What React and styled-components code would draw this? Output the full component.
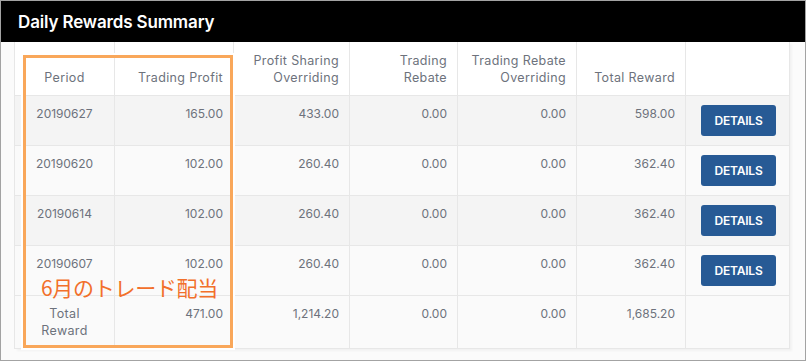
import React from "react";
import styled, { createGlobalStyle } from "styled-components";

const Global = createGlobalStyle`
  html, body { margin: 0; padding: 0; background: #fff; }
  * { box-sizing: border-box; }
`;

const Frame = styled.div`
  width: 806px;
  height: 361px;
  border: 1px solid #a3a3a3;
  background: #fbfbfb;
  display: flex;
  flex-direction: column;
  font-family: Inter, "Noto Sans", sans-serif;
`;

const TitleBar = styled.div`
  height: 41px;
  flex: none;
  background: #000;
  color: #fff;
  display: flex;
  align-items: center;
  padding-left: 17px;
  font-size: 17px;
  font-weight: 600;
  letter-spacing: -0.15px;
`;

const Body = styled.div`
  padding: 0 15px 0 13px;
`;

const TableWrap = styled.div`
  position: relative;
  width: 775px;
  box-shadow: 3px 2px 2px rgba(0, 0, 0, 0.04);
`;

const Table = styled.table`
  width: 775px;
  border-collapse: collapse;
  table-layout: fixed;
  background: #fff;
  font-size: 12px;
  color: #6d727c;
`;

const HeadRow = styled.tr`
  height: 53px;
  background: #fff;
`;

const Row = styled.tr`
  height: ${(p) => (p.$tall ? 53 : 50)}px;
  background: ${(p) => (p.$odd ? "#f4f4f4" : "#fafafa")};
`;

const Th = styled.th`
  border: 1px solid #e7e7e7;
  border-top: none;
  font-weight: 400;
  font-size: 12.5px;
  letter-spacing: 0.35px;
  line-height: 17px;
  vertical-align: bottom;
  padding: 0 ${(p) => (p.$center ? "0" : "10px")} 9px 0;
  text-align: ${(p) => (p.$center ? "center" : "right")};
`;

const Td = styled.td`
  border: 1px solid #e7e7e7;
  vertical-align: top;
  line-height: 17px;
  padding: ${(p) => (p.$btn ? "9px 0 0 15px" : "9px 10px 0 0")};
  text-align: ${(p) => (p.$center ? "center" : p.$btn ? "left" : "right")};
  ${(p) => p.$center && "padding-right: 0;"}
`;

const Label = styled.span`
  font-size: 12.5px;
  letter-spacing: 0.35px;
`;

const DetailsButton = styled.button`
  display: block;
  width: 75px;
  height: 31px;
  border: none;
  border-radius: 3px;
  background: #275a95;
  color: #fff;
  font-family: Inter, "Noto Sans", sans-serif;
  font-size: 12px;
  font-weight: 600;
  letter-spacing: -0.2px;
  cursor: pointer;
`;

const Highlight = styled.div`
  position: absolute;
  left: 9px;
  top: 13px;
  width: 210px;
  height: 293px;
  border: 3px solid #f9a75a;
  box-shadow: 0 0 0 2px #fff;
  pointer-events: none;
`;

const Note = styled.div`
  position: absolute;
  left: 27px;
  top: 230px;
  font-family: "Noto Sans CJK JP", sans-serif;
  font-size: 21px;
  font-weight: 400;
  color: #f2702b;
  letter-spacing: -0.3px;
  white-space: nowrap;
`;

const rows = [
  ["20190627", "165.00", "433.00", "0.00", "0.00", "598.00"],
  ["20190620", "102.00", "260.40", "0.00", "0.00", "362.40"],
  ["20190614", "102.00", "260.40", "0.00", "0.00", "362.40"],
  ["20190607", "102.00", "260.40", "0.00", "0.00", "362.40"],
];

const widths = [100, 119, 116, 108, 119, 109, 104];

export default function App() {
  return (
    <>
      <Global />
      <Frame>
        <TitleBar>Daily Rewards Summary</TitleBar>
        <Body>
          <TableWrap>
            <Table>
              <colgroup>
                {widths.map((w, i) => (
                  <col key={i} style={{ width: w }} />
                ))}
              </colgroup>
              <thead>
                <HeadRow>
                  <Th $center>Period</Th>
                  <Th>Trading Profit</Th>
                  <Th>
                    Profit Sharing
                    <br />
                    Overriding
                  </Th>
                  <Th>
                    Trading
                    <br />
                    Rebate
                  </Th>
                  <Th>
                    Trading Rebate
                    <br />
                    Overriding
                  </Th>
                  <Th>Total Reward</Th>
                  <Th />
                </HeadRow>
              </thead>
              <tbody>
                {rows.map((r, i) => (
                  <Row key={r[0]} $odd={i % 2 === 0}>
                    <Td $center>{r[0]}</Td>
                    {r.slice(1).map((v, j) => (
                      <Td key={j}>{v}</Td>
                    ))}
                    <Td $btn>
                      <DetailsButton>DETAILS</DetailsButton>
                    </Td>
                  </Row>
                ))}
                <Row $tall>
                  <Td $center>
                    <Label>
                      Total
                      <br />
                      Reward
                    </Label>
                  </Td>
                  <Td>471.00</Td>
                  <Td>1,214.20</Td>
                  <Td>0.00</Td>
                  <Td>0.00</Td>
                  <Td>1,685.20</Td>
                  <Td $btn />
                </Row>
              </tbody>
            </Table>
            <Highlight />
            <Note>6月のトレード配当</Note>
          </TableWrap>
        </Body>
      </Frame>
    </>
  );
}
